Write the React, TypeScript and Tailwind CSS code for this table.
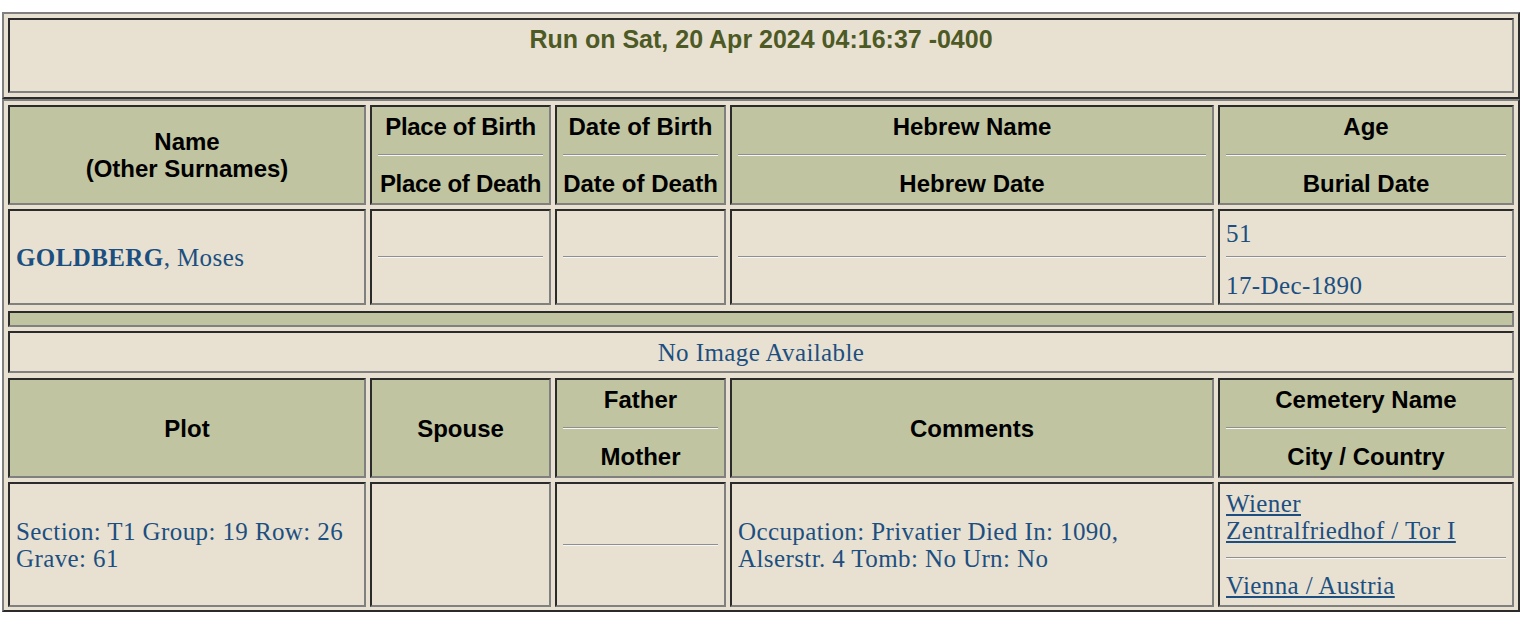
import type { ReactNode } from 'react';

const sans = "font-['Liberation_Sans',Arial,sans-serif]";
const serif = "font-['Liberation_Serif','Times_New_Roman',serif]";

type CellProps = {
  head?: boolean;
  className?: string;
  children?: ReactNode;
};

function Cell({ head, className = '', children }: CellProps) {
  return (
    <div
      className={`flex flex-col border-2 border-t-[#2b2b2b] border-l-[#2b2b2b] border-r-[#808080] border-b-[#808080] p-[6px] ${
        head
          ? `bg-[#c0c4a0] text-center text-[24px] font-bold leading-[27px] whitespace-nowrap text-black ${sans}`
          : `bg-[#e8e1d2] text-[25px] leading-[27px] tracking-[0.4px] text-[#1c4f80] ${serif}`
      } ${className.includes('justify-') ? '' : 'justify-center'} ${className}`}
    >
      {children}
    </div>
  );
}

function Rule({ gap = 'my-[14px]' }: { gap?: string }) {
  return <div className={`h-[2px] border-t border-b border-t-[#8f8f8f] border-b-[#f6f6f6] ${gap}`} />;
}

function Split({ top, bottom, gap }: { top: ReactNode; bottom: ReactNode; gap?: string }) {
  return (
    <>
      <div>{top}</div>
      <Rule gap={gap} />
      <div>{bottom}</div>
    </>
  );
}

const frame =
  'ml-[2px] w-[1518px] border-2 border-t-[#808080] border-l-[#808080] border-r-[#2b2b2b] border-b-[#2b2b2b] bg-[#e8e1d2]';

export default function App() {
  return (
    <div className="min-h-screen bg-white pt-[12px]">
      <div className={`${frame} p-1`}>
        <div
          className={`h-[75px] border-2 border-t-[#2b2b2b] border-l-[#2b2b2b] border-r-[#808080] border-b-[#808080] p-[6px] text-center text-[25px] font-bold leading-[27px] text-[#4d5a25] ${sans}`}
        >
          Run on Sat, 20 Apr 2024 04:16:37 -0400
        </div>
      </div>

      <div className={`${frame} px-1 pt-1 pb-[3px]`}>
        <div className="grid grid-cols-[358px_181px_171px_484px_296px] gap-1">
          {/* first header row */}
          <Cell head className="h-[100px]">
            <div>Name</div>
            <div>(Other Surnames)</div>
          </Cell>
          <Cell head className="h-[100px] tracking-[-0.3px]">
            <Split top="Place of Birth" bottom="Place of Death" />
          </Cell>
          <Cell head className="h-[100px]">
            <Split top="Date of Birth" bottom="Date of Death" />
          </Cell>
          <Cell head className="h-[100px]">
            <Split top="Hebrew Name" bottom="Hebrew Date" />
          </Cell>
          <Cell head className="h-[100px]">
            <Split top="Age" bottom="Burial Date" />
          </Cell>

          {/* person row */}
          <Cell className="h-[96px]">
            <div>
              <span className="font-bold">GOLDBERG</span>, Moses
            </div>
          </Cell>
          <Cell className="h-[96px]">
            <Rule gap="my-0" />
          </Cell>
          <Cell className="h-[96px]">
            <Rule gap="my-0" />
          </Cell>
          <Cell className="h-[96px]">
            <Rule gap="my-0" />
          </Cell>
          <Cell className="h-[96px] justify-start">
            <div className="mt-[3px]">51</div>
            <Rule gap="mt-[9px] mb-[14px]" />
            <div>17-Dec-1890</div>
          </Cell>

          <div className="col-span-5 mt-[2px] h-[16px] border-2 border-t-[#2b2b2b] border-l-[#2b2b2b] border-r-[#808080] border-b-[#808080] bg-[#c0c4a0]" />

          <Cell className="col-span-5 h-[42px] items-center">
            <div>No Image Available</div>
          </Cell>

          {/* second header row */}
          <Cell head className="mt-[1px] h-[100px]">
            <div>Plot</div>
          </Cell>
          <Cell head className="mt-[1px] h-[100px]">
            <div>Spouse</div>
          </Cell>
          <Cell head className="mt-[1px] h-[100px]">
            <Split top="Father" bottom="Mother" />
          </Cell>
          <Cell head className="mt-[1px] h-[100px]">
            <div>Comments</div>
          </Cell>
          <Cell head className="mt-[1px] h-[100px]">
            <Split top="Cemetery Name" bottom="City / Country" />
          </Cell>

          {/* burial row */}
          <Cell className="h-[125px]">
            <div>
              Section: T1 Group: 19 Row: 26
              <br />
              Grave: 61
            </div>
          </Cell>
          <Cell className="h-[125px]" />
          <Cell className="h-[125px]">
            <Rule gap="my-0" />
          </Cell>
          <Cell className="h-[125px]">
            <div>
              Occupation: Privatier Died In: 1090,
              <br />
              Alserstr. 4 Tomb: No Urn: No
            </div>
          </Cell>
          <Cell className="h-[125px]">
            <div>
              <a href="#" className="underline">
                Wiener
                <br />
                Zentralfriedhof / Tor I
              </a>
            </div>
            <Rule gap="my-[13px]" />
            <div>
              <a href="#" className="underline">
                Vienna / Austria
              </a>
            </div>
          </Cell>
        </div>
      </div>
    </div>
  );
}
